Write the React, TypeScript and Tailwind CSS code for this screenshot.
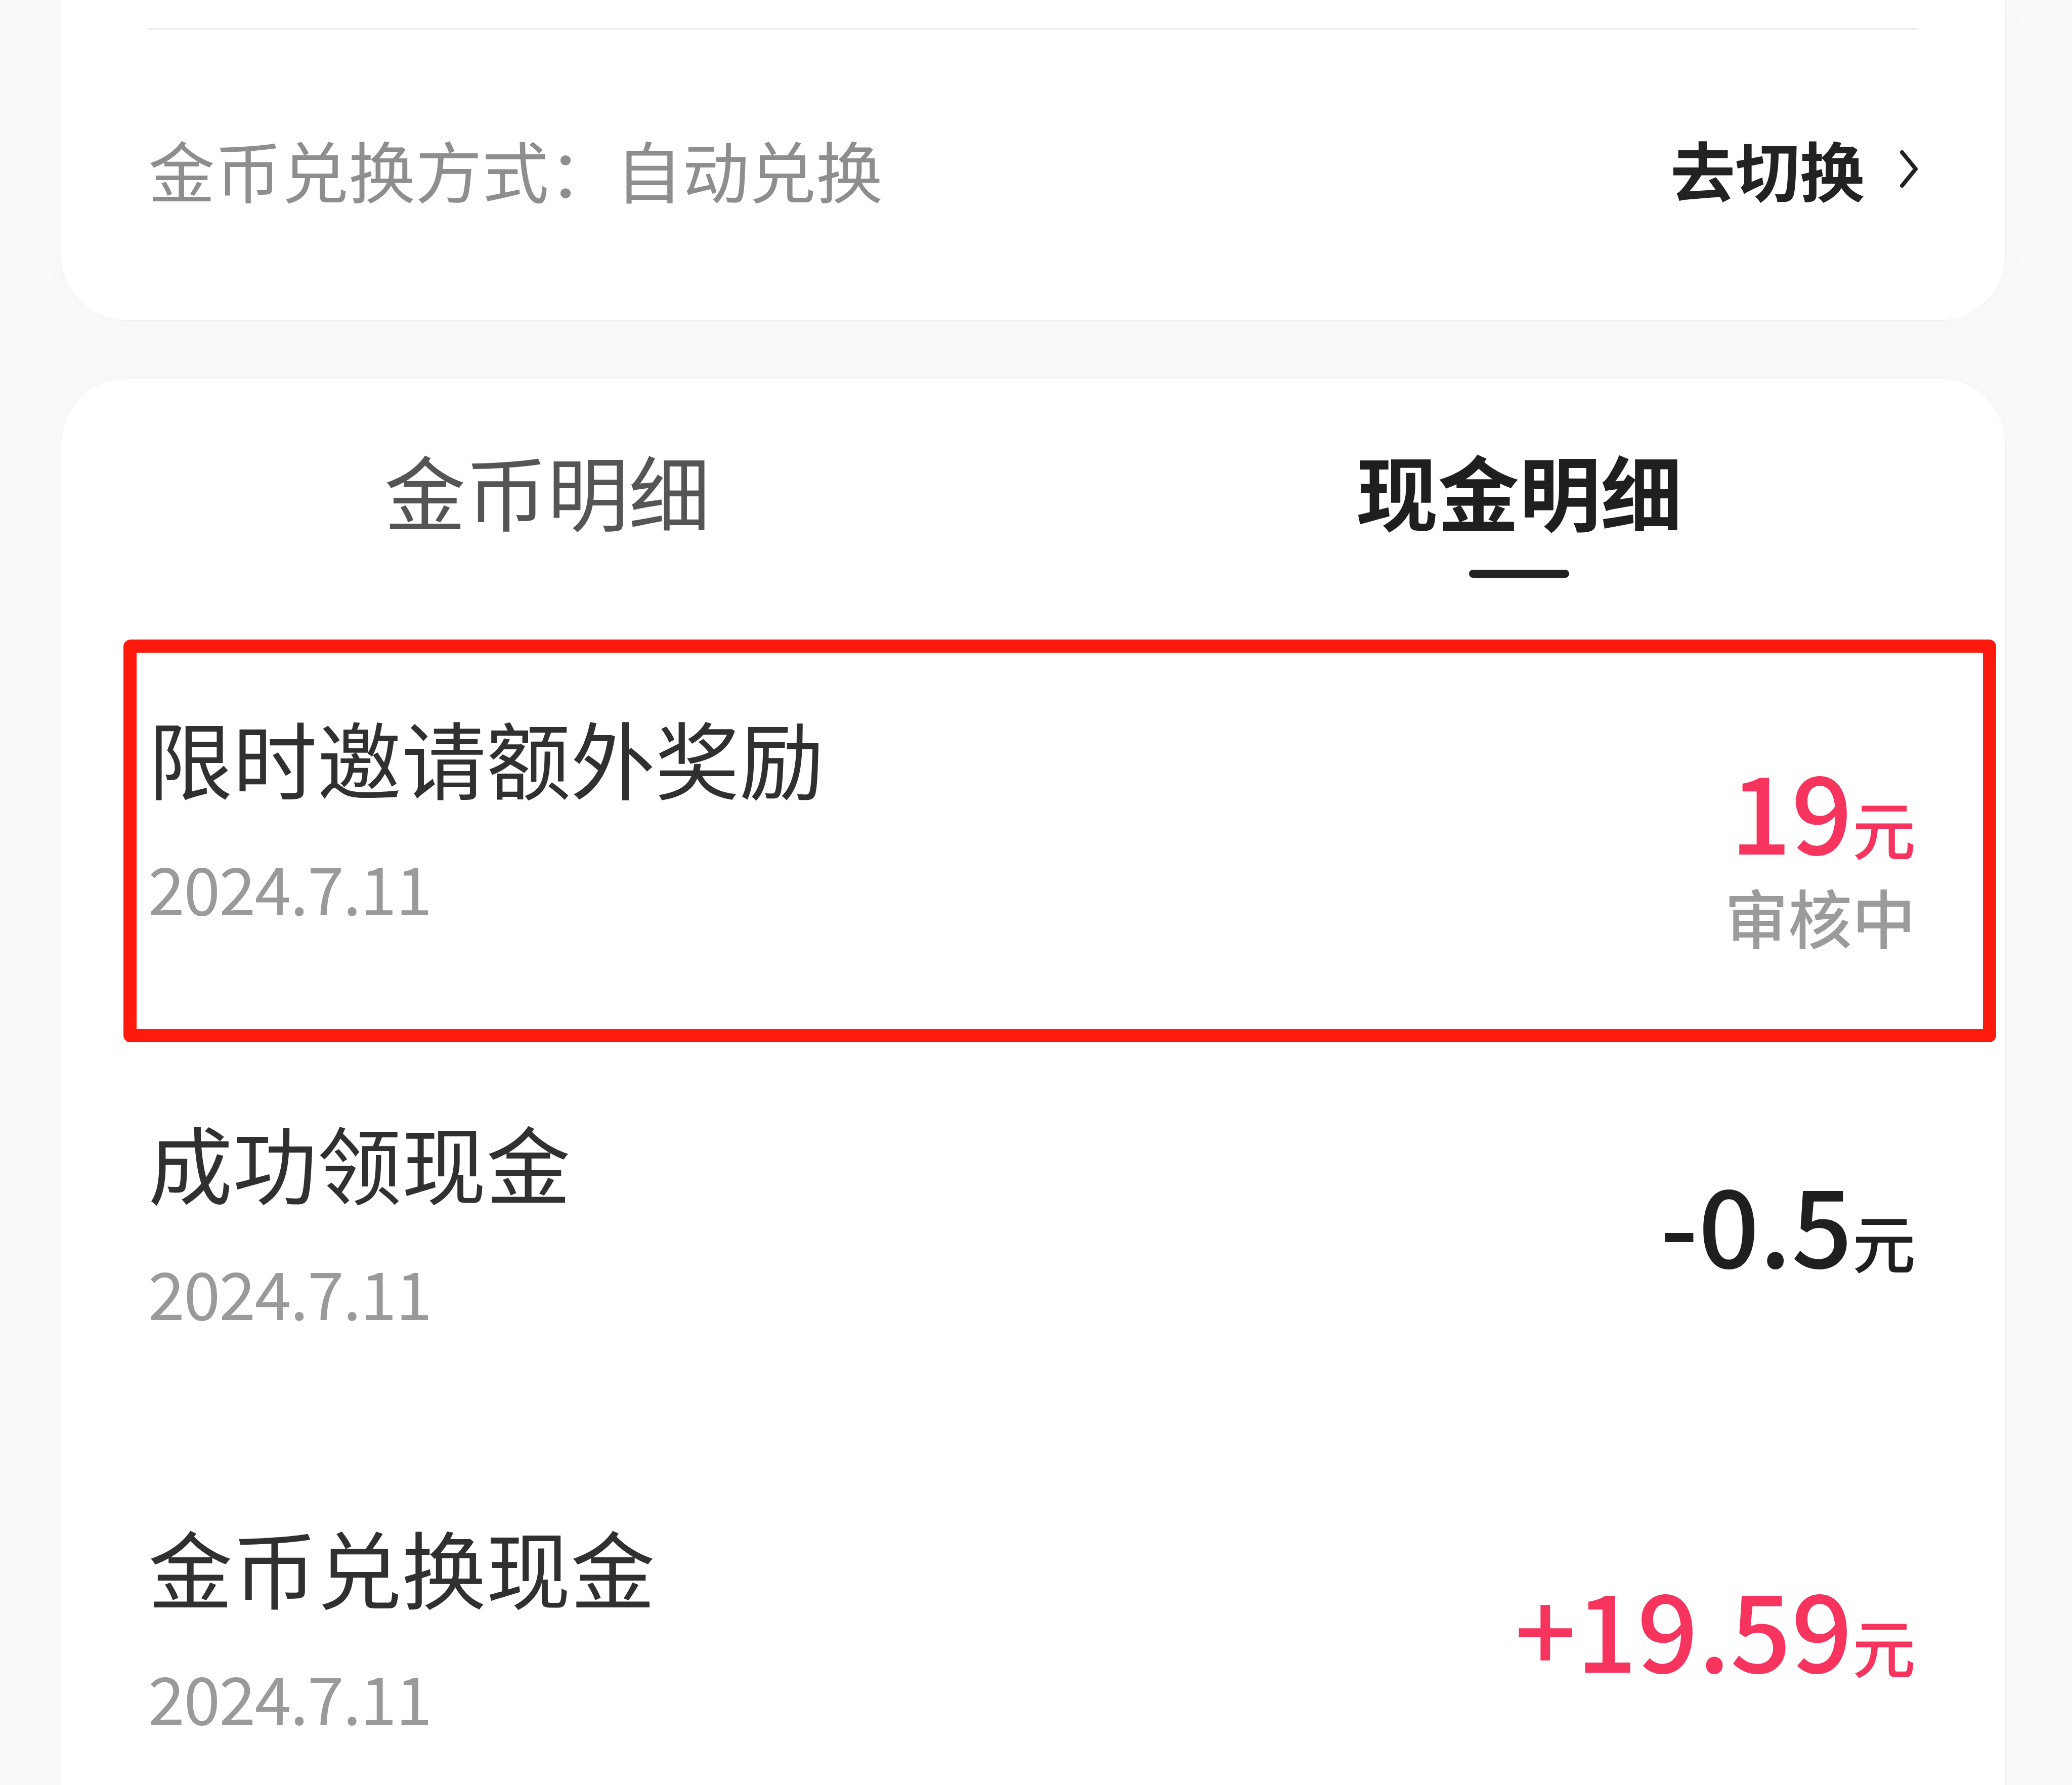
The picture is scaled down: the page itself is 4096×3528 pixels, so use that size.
const cjk = "font-['Noto_Sans_CJK_SC',sans-serif]";

interface Record {
  title: string;
  date: string;
  amount: string;
  tone: "pink" | "dark";
  status?: string;
  marked?: boolean;
}

const records: Record[] = [
  { title: "限时邀请额外奖励", date: "2024.7.11", amount: "19", tone: "pink", status: "审核中", marked: true },
  { title: "成功领现金", date: "2024.7.11", amount: "-0.5", tone: "dark" },
  { title: "金币兑换现金", date: "2024.7.11", amount: "+19.59", tone: "pink" },
];

const Chevron = () => (
  <svg width="36" height="74" viewBox="0 0 36 74" fill="none" className="ml-[70px]">
    <polyline points="4,4 31,37 4,70" stroke="#222222" strokeWidth="8" strokeLinecap="round" strokeLinejoin="round" />
  </svg>
);

const RecordRow = ({ item }: { item: Record }) => {
  const color = item.tone === "pink" ? "text-[#f6345e]" : "text-[#1f1f1f]";
  return (
    <div className="relative flex h-[800px] items-center justify-between">
      <div className="flex flex-col">
        <span className="text-[167px] leading-none text-[#303030]">{item.title}</span>
        <span className="mt-[108px] text-[130px] leading-none tracking-[-2px] text-[#9a9a9a]">{item.date}</span>
      </div>
      <div className={`flex flex-col items-end ${item.status ? "mt-[136px]" : ""}`}>
        <div className={`flex items-baseline font-medium ${color}`}>
          <span className="text-[212px] leading-none">{item.amount}</span>
          <span className="text-[125px] leading-none">元</span>
        </div>
        {item.status && (
          <span className="mt-[44px] text-[126px] leading-none font-medium text-[#9b9b9b]">{item.status}</span>
        )}
      </div>
      {item.marked && (
        <div className="pointer-events-none absolute left-[-49px] right-[-159px] top-[50px] bottom-[-46px] rounded-[14px] border-[26px] border-[#ff1a0d]" />
      )}
    </div>
  );
};

export default function App() {
  return (
    <div className={`min-h-[3528px] h-[3528px] overflow-hidden bg-[#fafafa] ${cjk}`}>
      {/* exchange mode card, top cut off */}
      <div className="ml-[120px] mr-[131px] rounded-b-[130px] border border-t-0 border-[#f1f1f1] bg-white px-[172px] pt-[56px] pb-[24px] shadow-[0_0_60px_rgba(0,0,0,0.025)]">
        <div className="h-[3px] bg-[#ececec]" />
        <div className="flex h-[550px] items-center justify-between">
          <span className="text-[132px] leading-none text-[#8e8e8e]">金币兑换方式：自动兑换</span>
          <div className="flex items-center">
            <span className="text-[128px] leading-none font-bold text-[#222222]">去切换</span>
            <Chevron />
          </div>
        </div>
      </div>

      {/* detail card */}
      <div className="mt-[113px] ml-[120px] mr-[131px] min-h-[2800px] rounded-t-[130px] border border-b-0 border-[#f1f1f1] bg-white shadow-[0_0_60px_rgba(0,0,0,0.025)]">
        <div className="grid grid-cols-2 pt-[139px]">
          <div className="flex flex-col items-center">
            <span className="text-[161px] leading-none text-[#555555]">金币明细</span>
          </div>
          <div className="flex flex-col items-center">
            <span className="text-[161px] leading-none font-bold text-[#1f1f1f]">现金明细</span>
            <div className="mt-[78px] h-[16px] w-[198px] rounded-full bg-[#222222]" />
          </div>
        </div>
        <div className="mt-[72px] pl-[172px] pr-[177px]">
          {records.map((item, i) => (
            <RecordRow key={i} item={item} />
          ))}
        </div>
      </div>
    </div>
  );
}
